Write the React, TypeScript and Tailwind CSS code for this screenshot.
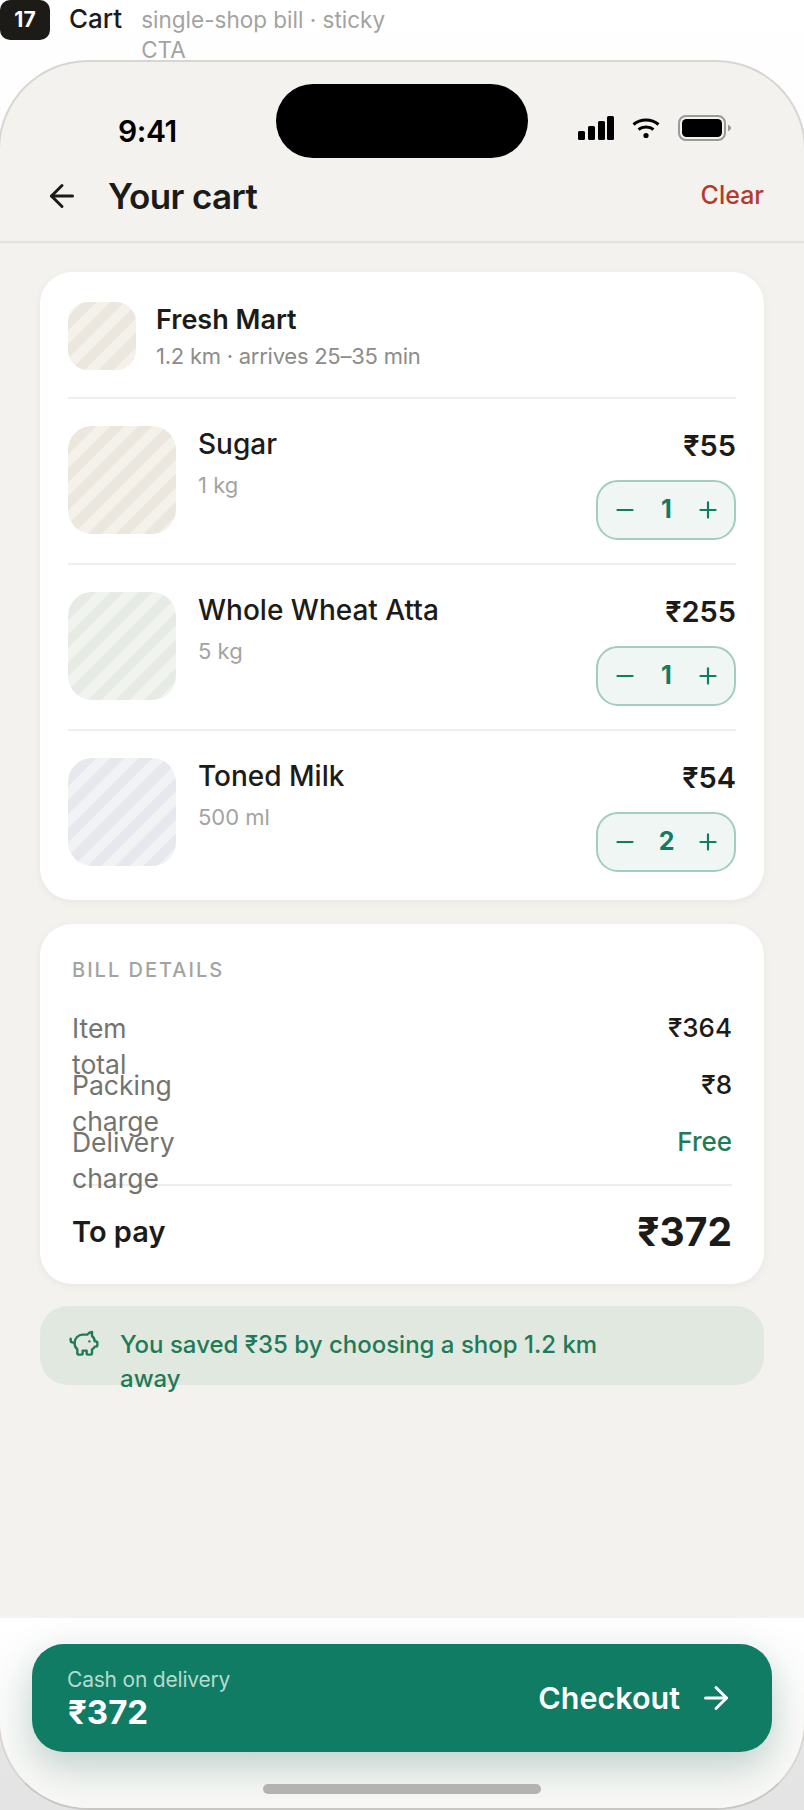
import { ArrowLeft, ArrowRight, Minus, PiggyBank, Plus } from "lucide-react";

const items = [
  { name: "Sugar", unit: "1 kg", price: "₹55", qty: 1, stripes: "bg-[repeating-linear-gradient(135deg,#f4f1ea_0,#f4f1ea_10px,#ebe7df_10px,#ebe7df_20px)]" },
  { name: "Whole Wheat Atta", unit: "5 kg", price: "₹255", qty: 1, stripes: "bg-[repeating-linear-gradient(135deg,#f1f3ee_0,#f1f3ee_10px,#e7ebe5_10px,#e7ebe5_20px)]" },
  { name: "Toned Milk", unit: "500 ml", price: "₹54", qty: 2, stripes: "bg-[repeating-linear-gradient(135deg,#f1f2f4_0,#f1f2f4_10px,#e7e8ee_10px,#e7e8ee_20px)]" },
];

const bill = [
  { label: "Item total", value: "₹364", color: "text-[#1c1b18]" },
  { label: "Packing charge", value: "₹8", color: "text-[#1c1b18]" },
  { label: "Delivery charge", value: "Free", color: "text-[#1f7a58]" },
];

function StatusIcons() {
  return (
    <div className="flex items-center gap-[18px]">
      <svg width="36" height="24" viewBox="0 0 36 24" fill="#000">
        <rect x="0" y="15" width="7" height="9" rx="1.5" />
        <rect x="10" y="10" width="7" height="14" rx="1.5" />
        <rect x="20" y="5" width="7" height="19" rx="1.5" />
        <rect x="29" y="0" width="7" height="24" rx="1.5" />
      </svg>
      <svg width="28" height="22" viewBox="0 0 28 22" fill="none" stroke="#000" strokeWidth="3">
        <path d="M1.5 7.5C8.5 1.5 19.5 1.5 26.5 7.5" />
        <path d="M6.5 12.5C10.5 9.3 17.5 9.3 21.5 12.5" />
        <circle cx="14" cy="18.5" r="2.6" fill="#000" stroke="none" />
      </svg>
      <svg width="54" height="26" viewBox="0 0 54 26" fill="none">
        <rect x="1" y="1" width="46" height="24" rx="7" stroke="#9a9a98" strokeWidth="2" />
        <rect x="4" y="4" width="40" height="18" rx="4.5" fill="#000" />
        <path d="M50 9.5l3 2.5v2l-3 2.5z" fill="#9a9a98" />
      </svg>
    </div>
  );
}

export default function App() {
  return (
    <div className="h-[1810px] w-[804px] overflow-hidden bg-gradient-to-b from-white to-[#e4e4e4] font-['Inter',sans-serif] text-[#1c1b18]">
      <div className="flex h-[60px] items-start">
        <div className="flex h-[40px] w-[50px] items-center justify-center rounded-[10px] bg-[#1c1b18] text-[21px] font-bold text-white">17</div>
        <div className="ml-[19px] text-[26px] leading-[38px] font-medium">Cart</div>
        <div className="mt-[5px] ml-[19px] w-[270px] text-[22.5px] leading-[30px] text-[#a3a3a1]">single-shop bill · sticky CTA</div>
      </div>

      <div className="relative -ml-[2px] flex h-[1750px] w-[808px] flex-col overflow-hidden rounded-[90px] border-2 border-[#d8d6d2] border-b-[#c8c7c4] bg-[#f3f2ee]">
        <div className="flex h-[100px] shrink-0 pt-[22px]">
          <div className="mt-[27px] ml-[118px] w-[158px] text-[30px] leading-[40px] font-semibold tracking-[-0.4px] text-black">9:41</div>
          <div className="h-[74px] w-[252px] rounded-full bg-black" />
          <div className="mt-[31px] ml-[50px]">
            <StatusIcons />
          </div>
        </div>

        <div className="flex h-[81px] shrink-0 items-center border-b-2 border-[#e5e3de] pr-[40px] pb-[11px] pl-[44px]">
          <ArrowLeft size={36} strokeWidth={2} />
          <div className="ml-[28px] flex-1 text-[35px] font-semibold tracking-[-0.6px]">Your cart</div>
          <div className="text-[25px] font-medium text-[#b43a2e]">Clear</div>
        </div>

        <div className="flex flex-1 flex-col px-[40px] pt-[29px]">
          <div className="rounded-[32px] bg-white px-[28px] shadow-[0_2px_8px_rgba(0,0,0,0.05)]">
            <div className="flex h-[127px] items-start border-b-2 border-[#f0efec] pt-[30px]">
              <div className="h-[68px] w-[68px] rounded-[20px] bg-[repeating-linear-gradient(135deg,#f4f1ea_0,#f4f1ea_10px,#ebe7df_10px,#ebe7df_20px)]" />
              <div className="ml-[20px]">
                <div className="text-[27px] leading-[36px] font-semibold">Fresh Mart</div>
                <div className="mt-[2px] text-[22px] leading-[32px] tracking-[-0.25px] text-[#8c8c89]">1.2 km · arrives 25–35 min</div>
              </div>
            </div>
            {items.map((item, i) => (
              <div key={item.name} className={`flex pt-[27px] ${i < items.length - 1 ? "h-[166px] border-b-2 border-[#f0efec]" : "h-[169px]"}`}>
                <div className={`h-[108px] w-[108px] rounded-[24px] ${item.stripes}`} />
                <div className="ml-[22px] flex-1">
                  <div className="text-[28px] leading-[36px] font-medium">{item.name}</div>
                  <div className="mt-[7px] text-[22px] leading-[32px] text-[#a3a3a1]">{item.unit}</div>
                </div>
                <div className="flex flex-col items-end">
                  <div className="mt-[2px] text-[29px] leading-[36px] font-semibold">{item.price}</div>
                  <div className="mt-[16px] flex h-[60px] w-[140px] items-center justify-between rounded-[22px] border-2 border-[#a3cdc0] bg-[#eff6f4] pr-[13px] pl-[14px] text-[#0f7c63]">
                    <Minus size={26} strokeWidth={2} />
                    <span className="text-[25px] font-bold">{item.qty}</span>
                    <Plus size={26} strokeWidth={2} />
                  </div>
                </div>
              </div>
            ))}
          </div>

          <div className="mt-[24px] h-[360px] rounded-[32px] bg-white px-[32px] pt-[32px] shadow-[0_2px_8px_rgba(0,0,0,0.05)]">
            <div className="text-[20px] leading-[28px] font-medium tracking-[2px] text-[#a3a3a1]">BILL DETAILS</div>
            <div className="mt-[26px]">
              {bill.map((row) => (
                <div key={row.label} className="flex h-[57px] items-start justify-between">
                  <div className="w-[110px] text-[26.5px] leading-[36px] text-[#73736f]">{row.label}</div>
                  <div className={`text-[26px] leading-[36px] font-medium ${row.color}`}>{row.value}</div>
                </div>
              ))}
            </div>
            <div className="mt-[3px] flex h-[88px] items-center justify-between border-t-2 border-[#eeedea] pt-[6px]">
              <div className="text-[29px] font-semibold">To pay</div>
              <div className="text-[39px] font-bold">₹372</div>
            </div>
          </div>

          <div className="mt-[22px] flex h-[79px] items-start rounded-[28px] bg-[#e0e8e0] pt-[22px] pl-[28px] text-[#1f7a58]">
            <PiggyBank size={32} strokeWidth={1.8} />
            <div className="ml-[20px] w-[490px] text-[24px] leading-[34px] font-medium">You saved ₹35 by choosing a shop 1.2 km away</div>
          </div>
        </div>

        <div className="h-[190px] shrink-0 bg-gradient-to-b from-white to-[#f8f8f6] px-[32px] pt-[26px]">
          <div className="flex h-[108px] items-center justify-between rounded-[32px] bg-[#0f7c63] pr-[38px] pl-[35px] text-white shadow-[0_14px_40px_rgba(15,80,60,0.26)]">
            <div>
              <div className="text-[21px] leading-[28px] tracking-[-0.2px] text-[#b5dbcf]">Cash on delivery</div>
              <div className="pl-[1px] text-[33px] leading-[36px] font-bold">₹372</div>
            </div>
            <div className="flex items-center gap-[18px]">
              <span className="text-[30.5px] font-semibold">Checkout</span>
              <ArrowRight size={36} strokeWidth={2} />
            </div>
          </div>
          <div className="mx-auto mt-[32px] h-[10px] w-[278px] rounded-full bg-[#b3b3b2]" />
        </div>
      </div>
    </div>
  );
}
